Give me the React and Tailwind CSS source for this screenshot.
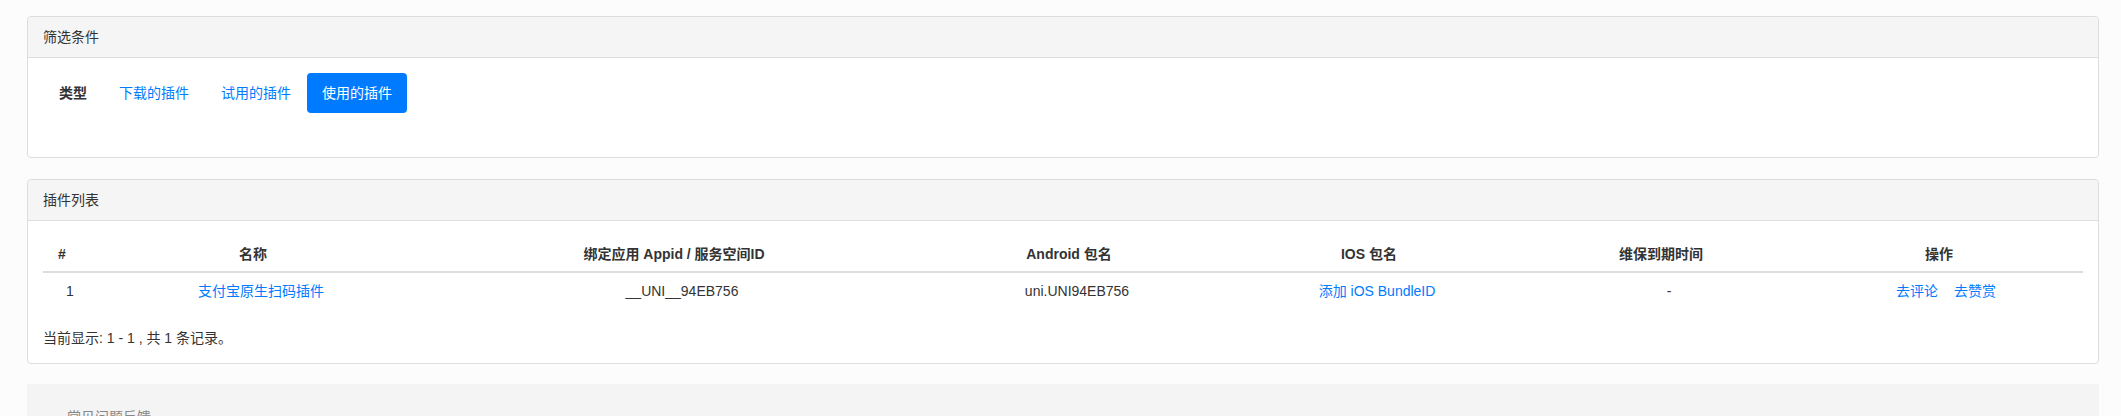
import React from "react";

const cols = [38, 344, 498, 292, 308, 276, 284];

export default function App() {
  return (
    <div className="min-h-screen bg-[#fcfcfc] pt-[16px] pl-[27px] pr-[22px] font-['Liberation_Sans','Noto_Sans_CJK_SC',sans-serif] text-[14px] leading-[20px] text-[#333]">
      {/* Filter panel */}
      <div className="mb-[21px] rounded-[4px] border border-[#dddddd] bg-white">
        <div className="flex h-[41px] items-center rounded-t-[4px] border-b border-[#dddddd] bg-[#f5f5f5] px-[15px]">
          筛选条件
        </div>
        <div className="h-[99px] pl-[16px] pt-[15px]">
          <div className="flex items-center">
            <span className="flex h-[40px] items-center px-[15px] font-bold">类型</span>
            <a className="ml-[2px] flex h-[40px] items-center px-[15px] text-[#007bff]">下载的插件</a>
            <a className="ml-[2px] flex h-[40px] items-center px-[15px] text-[#007bff]">试用的插件</a>
            <a className="ml-[1px] flex h-[40px] items-center rounded-[4px] bg-[#007bff] px-[15px] text-white">使用的插件</a>
          </div>
        </div>
      </div>

      {/* List panel */}
      <div className="rounded-[4px] border border-[#dddddd] bg-white">
        <div className="flex h-[41px] items-center rounded-t-[4px] border-b border-[#dddddd] bg-[#f5f5f5] px-[15px]">
          插件列表
        </div>
        <div className="px-[15px] pb-[15px] pt-[15px]">
          <table className="mb-[20px] w-full table-fixed border-collapse">
            <colgroup>
              {cols.map((w, i) => (
                <col key={i} style={{ width: w }} />
              ))}
            </colgroup>
            <thead>
              <tr className="border-b-2 border-[#dddddd]">
                <th className="h-[36px] px-[8px] text-center font-bold">#</th>
                <th className="px-[8px] text-center font-bold">名称</th>
                <th className="px-[8px] text-center font-bold">绑定应用 Appid / 服务空间ID</th>
                <th className="px-[8px] text-center font-bold">Android 包名</th>
                <th className="px-[8px] text-center font-bold">IOS 包名</th>
                <th className="px-[8px] text-center font-bold">维保到期时间</th>
                <th className="pl-[6px] pr-[10px] text-center font-bold">操作</th>
              </tr>
            </thead>
            <tbody>
              <tr>
                <td className="h-[36px] pl-[16px] text-center">1</td>
                <td className="pl-[16px] text-center">
                  <a className="text-[#007bff]">支付宝原生扫码插件</a>
                </td>
                <td className="pl-[16px] text-center">__UNI__94EB756</td>
                <td className="pl-[16px] text-center">uni.UNI94EB756</td>
                <td className="pl-[16px] text-center">
                  <a className="text-[#007bff]">添加 iOS BundleID</a>
                </td>
                <td className="pl-[16px] text-center">-</td>
                <td className="pl-[10px] text-center">
                  <a className="text-[#007bff]">去评论</a>
                  <a className="ml-[16px] text-[#007bff]">去赞赏</a>
                </td>
              </tr>
            </tbody>
          </table>
          <div>当前显示: 1 - 1 , 共 1 条记录。</div>
        </div>
      </div>

      {/* Bottom panel */}
      <div className="mt-[20px] h-[120px] bg-[#f4f4f4] pl-[22px] pt-[23px]">
        <div className="flex items-center text-[#888888]">
          <span className="mr-[8px] text-[12px]">⌄</span>
          <span>常见问题反馈</span>
        </div>
      </div>
    </div>
  );
}
